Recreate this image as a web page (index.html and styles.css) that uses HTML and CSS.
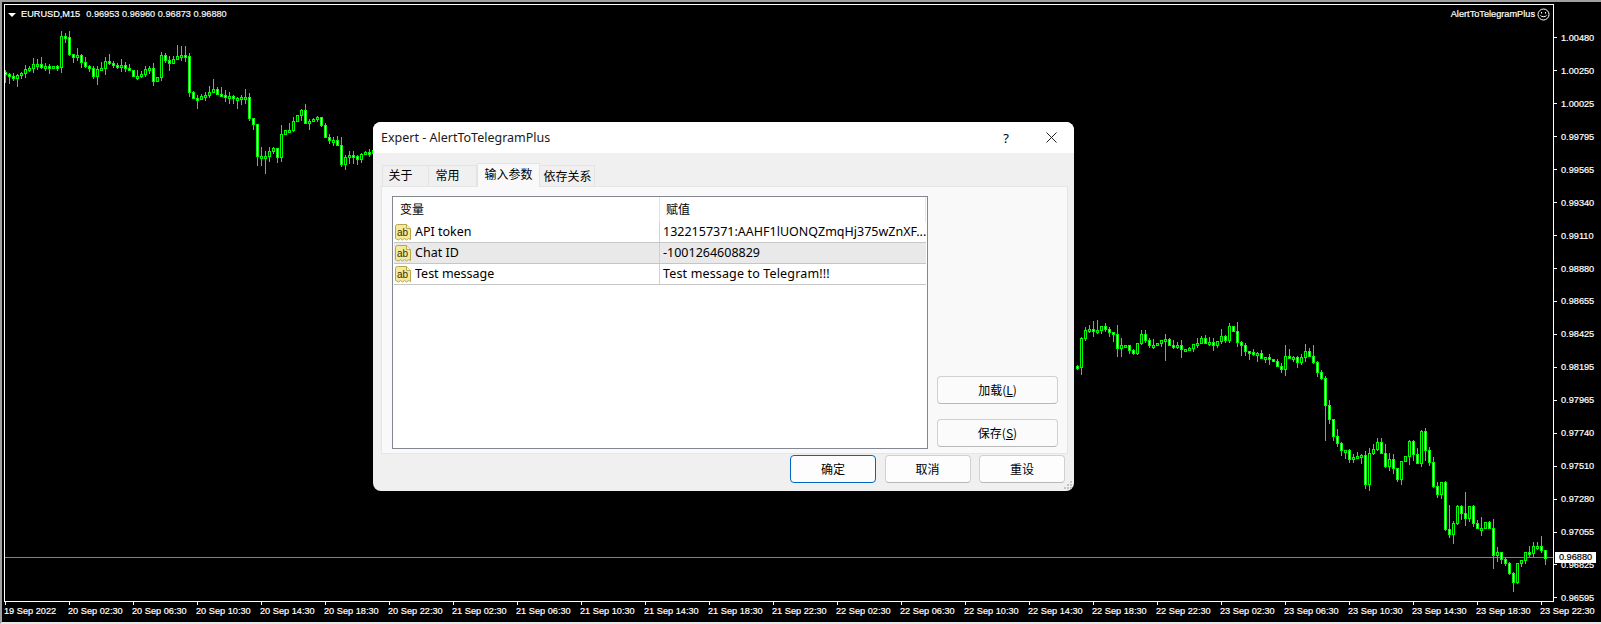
FILE: index.html
```html
<!DOCTYPE html>
<html lang="zh">
<head>
<meta charset="utf-8">
<title>Expert - AlertToTelegramPlus</title>
<link rel="stylesheet" href="styles.css">
</head>
<body>
<div class="screen">
  <div class="terminal">
    <div class="plot">
      <svg class="canvas" width="1548" height="596" viewBox="5 5 1548 596" shape-rendering="crispEdges">
        <rect class="priceline" x="5" y="557" width="1548" height="1"/>
        <path id="candleEdges" class="edges"/>
        <path id="candleUp" class="up"/>
        <path id="candleDown" class="down"/>
      </svg>
      <div class="chart-head">
        <div class="symbol"><span class="marker"></span><span>EURUSD,M15</span><span class="quotes">0.96953 0.96960 0.96873 0.96880</span></div>
        <div class="ea"><span>AlertToTelegramPlus</span>
          <svg class="smile" width="13" height="13" viewBox="0 0 13 13"><circle cx="6.5" cy="6.5" r="5.5"/><path d="M3.5 7.5c.8 1.6 5.200 1.600 6 0"/><path d="M4.500 4v1.500M8.500 4v1.500"/></svg>
        </div>
      </div>
    </div>
    <div class="y-axis" id="yAxis">
      <div class="y-label">1.00480</div><div class="y-label">1.00250</div><div class="y-label">1.00025</div>
      <div class="y-label">0.99795</div><div class="y-label">0.99565</div><div class="y-label">0.99340</div>
      <div class="y-label">0.99110</div><div class="y-label">0.98880</div><div class="y-label">0.98655</div>
      <div class="y-label">0.98425</div><div class="y-label">0.98195</div><div class="y-label">0.97965</div>
      <div class="y-label">0.97740</div><div class="y-label">0.97510</div><div class="y-label">0.97280</div>
      <div class="y-label">0.97055</div><div class="y-label">0.96825</div><div class="y-label">0.96595</div>
      <div class="price-box">0.96880</div>
    </div>
    <div class="x-axis">
      <div class="x-label">19 Sep 2022</div>
      <div class="x-label">20 Sep 02:30</div><div class="x-label">20 Sep 06:30</div><div class="x-label">20 Sep 10:30</div><div class="x-label">20 Sep 14:30</div><div class="x-label">20 Sep 18:30</div><div class="x-label">20 Sep 22:30</div>
      <div class="x-label">21 Sep 02:30</div><div class="x-label">21 Sep 06:30</div><div class="x-label">21 Sep 10:30</div><div class="x-label">21 Sep 14:30</div><div class="x-label">21 Sep 18:30</div><div class="x-label">21 Sep 22:30</div>
      <div class="x-label">22 Sep 02:30</div><div class="x-label">22 Sep 06:30</div><div class="x-label">22 Sep 10:30</div><div class="x-label">22 Sep 14:30</div><div class="x-label">22 Sep 18:30</div><div class="x-label">22 Sep 22:30</div>
      <div class="x-label">23 Sep 02:30</div><div class="x-label">23 Sep 06:30</div><div class="x-label">23 Sep 10:30</div><div class="x-label">23 Sep 14:30</div><div class="x-label">23 Sep 18:30</div><div class="x-label">23 Sep 22:30</div>
    </div>
  </div>
</div>

<div class="dialog">
  <div class="titlebar">
    <span class="title">Expert - AlertToTelegramPlus</span>
    <span class="help">?</span>
    <svg class="close" width="11" height="11" viewBox="0 0 11 11"><path d="M.5.5l10 10M10.500.5l-10 10"/></svg>
  </div>
  <div class="tabs">
    <div class="tab t1">关于</div>
    <div class="tab t2">常用</div>
    <div class="tab active">输入参数</div>
    <div class="tab t4">依存关系</div>
  </div>
  <div class="panel">
    <div class="list">
      <div class="list-head">
        <div class="head-cell c1">变量</div>
        <div class="head-cell c2">赋值</div>
      </div>
      <div class="row">
        <div class="cell c1"><svg class="ab" width="16" height="17" viewBox="0 0 16 17"><path class="ab-doc" d="M.5 2.500q0-2 2-2h9l4 4v11l-2-1-2 1.500-2-1.500-2 1.500-2-1.500-2 1.500-3-1.500z"/><path class="ab-fold" d="M11.500.5v4h4"/><text x="2" y="11.500">ab</text></svg><span>API token</span></div>
        <div class="cell c2">1322157371:AAHF1lUONQZmqHj375wZnXF...</div>
      </div>
      <div class="row selected">
        <div class="cell c1"><svg class="ab" width="16" height="17" viewBox="0 0 16 17"><path class="ab-doc" d="M.5 2.500q0-2 2-2h9l4 4v11l-2-1-2 1.500-2-1.500-2 1.500-2-1.500-2 1.500-3-1.500z"/><path class="ab-fold" d="M11.500.5v4h4"/><text x="2" y="11.500">ab</text></svg><span>Chat ID</span></div>
        <div class="cell c2">-1001264608829</div>
      </div>
      <div class="row">
        <div class="cell c1"><svg class="ab" width="16" height="17" viewBox="0 0 16 17"><path class="ab-doc" d="M.5 2.500q0-2 2-2h9l4 4v11l-2-1-2 1.500-2-1.500-2 1.500-2-1.500-2 1.500-3-1.500z"/><path class="ab-fold" d="M11.500.5v4h4"/><text x="2" y="11.500">ab</text></svg><span>Test message</span></div>
        <div class="cell c2 spaced">Test message to Telegram!!!</div>
      </div>
    </div>
    <div class="side">
      <button class="btn side-btn">加载(<u>L</u>)</button>
      <button class="btn side-btn">保存(<u>S</u>)</button>
    </div>
  </div>
  <div class="actions">
    <button class="btn action primary">确定</button>
    <button class="btn action">取消</button>
    <button class="btn action">重设</button>
  </div>
  <svg class="grip" width="9" height="9" viewBox="0 0 9 9"><path d="M6 0h2v2H6zM3 3h2v2H3zM6 3h2v2H6zM0 6h2v2H0zM3 6h2v2H3zM6 6h2v2H6z"/></svg>
</div>
<script src="chart.js"></script>
</body>
</html>
```
FILE: styles.css
```css
* { box-sizing: border-box; }
html, body { margin: 0; padding: 0; background: #000; overflow: hidden; }
body { width: 1601px; height: 624px; position: relative; font-family: "Noto Sans", "Noto Sans CJK SC", sans-serif; }

.screen {
  width: 1601px; height: 624px; background: #000;
  border-top: 2px solid #a0a0a0; border-left: 2px solid #a0a0a0; border-bottom: 2px solid #e8e8e8;
  padding: 2px 0 0 2px;
}
.terminal {
  display: grid; grid-template-columns: 1550px 1fr; grid-template-rows: 598px 1fr; height: 100%;
  font-family: "Liberation Sans", sans-serif; font-size: 9.2px; color: #fff; -webkit-text-stroke: .2px currentColor;
}
.plot { position: relative; border: 1px solid #fff; }
.canvas { position: absolute; left: 0; top: 0; display: block; }
.priceline { fill: #808080; }
.edges { fill: #00ff00; }
.up { fill: #000; }
.down { fill: #fff; }
.chart-head { position: relative; display: flex; justify-content: space-between; padding: 3px 3px 0 3px; line-height: 13px; }
.symbol { display: flex; align-items: center; }
.marker { width: 0; height: 0; border-left: 4px solid transparent; border-right: 4px solid transparent; border-top: 4px solid #fff; margin-right: 5px; }
.quotes { margin-left: 6px; color: #f2f8ff; }
.ea { display: flex; align-items: center; gap: 2px; }
.smile { fill: none; stroke: #fff; stroke-width: 1; }

.y-axis { position: relative; display: flex; flex-direction: column; padding-top: 17.5px; }
.y-label { flex: 0 0 32.94px; display: flex; align-items: center; }
.y-label::before { content: ""; width: 3px; height: 1px; background: #fff; margin-right: 4px; }
.price-box {
  position: absolute; left: 1px; top: 548px; width: 41px; height: 11px; background: #fff; color: #000;
  line-height: 11px; text-align: center;
}

.x-axis { display: flex; padding-left: 1px; grid-column: 1 / 3; }
.x-label { position: relative; flex: 0 0 64px; white-space: nowrap; padding-top: 3px; line-height: 12px; text-indent: -1px; }
.x-label::before { content: ""; position: absolute; left: 0; top: 0; width: 1px; height: 3px; background: #fff; }

.dialog {
  position: absolute; left: 373px; top: 122px; width: 701px; height: 369px;
  background: #f0f0f0; border-radius: 8px; overflow: hidden;
  display: flex; flex-direction: column; color: #000;
  font-family: "Noto Sans", "Noto Sans CJK SC", sans-serif; font-size: 12.5px;
}
.titlebar { flex: 0 0 31px; background: #fff; display: flex; align-items: center; padding: 0 17px 0 8px; font-size: 12.5px; }
.title { flex: 1; color: #1a1a1a; }
.help { margin-right: 37px; font-size: 13px; }
.close { stroke: #222; fill: none; stroke-width: 1; }

.tabs { display: flex; align-items: flex-end; height: 33px; flex: 0 0 33px; padding-left: 9px; position: relative; z-index: 1; }
.tab {
  height: 21px; width: 47px; background: #f0f0f0; border: 1px solid #e4e4e4; border-bottom: 0; border-left: 0;
  font-size: 12px; line-height: 18px; text-align: center; font-family: "Noto Sans CJK SC", sans-serif;
}
.t1 { width: 47px; padding-right: 10px; border-left: 1px solid #e4e4e4; }
.t2 { width: 48px; padding-right: 10px; }
.active { width: 63px; height: 24px; background: #f9f9f9; border-left: 1px solid #e4e4e4; line-height: 19px; margin-bottom: -1px; position: relative; }
.t4 { width: 55px; padding-left: 1px; line-height: 19px; }

.panel {
  margin: 0 6px 0 8px; height: 268px; flex: 0 0 268px; background: #f9f9f9; border: 1px solid #e6e6e6;
  padding: 9px 9px 4px 10px; display: flex; gap: 9px;
}
.list { width: 536px; height: 253px; background: #fff; border: 1px solid #828790; padding: 0 1px; }
.list-head { display: flex; height: 25px; font-family: "Noto Sans CJK SC", sans-serif; font-size: 12px; }
.head-cell { display: flex; align-items: center; padding: 0 0 2px 6px; border-right: 1px solid #e5e5e5; }
.head-cell.c1 { width: 266px; }
.head-cell.c2 { width: 266px; }
.row { display: flex; height: 21px; border-bottom: 1px solid #c6c6c6; font-size: 12.5px; line-height: 20px; }
.row.selected { background: #e9e9e9; }
.cell { white-space: nowrap; overflow: hidden; display: flex; align-items: center; }
.cell.c1 { width: 266px; border-right: 1px solid #d0d0d0; padding-left: 1px; gap: 4px; }
.cell.c2 { flex: 1; padding-left: 3px; }
.cell.spaced { letter-spacing: .15px; }
.ab { flex: none; }
.ab-doc { fill: #f4e99c; stroke: #b7a650; stroke-width: 1; }
.ab-fold { fill: #fff7c8; stroke: #b7a650; stroke-width: 1; }
.ab text { font: 10px "Liberation Sans", sans-serif; fill: #3a3000; }

.side { display: flex; flex-direction: column; justify-content: flex-end; gap: 15px; width: 121px; height: 253px; padding-bottom: 2px; }
.btn {
  display: block; background: #fdfdfd; border: 1px solid #d0d0d0; border-bottom-color: #b8b8b8; border-radius: 4px; padding: 0; color: #000;
  font-family: "Noto Sans CJK SC", sans-serif; font-size: 12px; height: 28px; line-height: 26px;
}
.side-btn { width: 121px; background: #fbfbfb; padding-bottom: 3px; }
.actions { display: flex; justify-content: flex-end; gap: 8.5px; padding: 1px 9px 0 0; }
.action { width: 86px; }
.primary { border: 1.5px solid #0067c0; }
.grip { position: absolute; right: 1px; bottom: 1px; fill: #c4c4c4; }
```
FILE: chart.js
```js
(function () {
  // Close-price trace read off the chart: [x, y] at the 4px candle grid.
  var KEY = [[5,74],[13,77],[21,72],[29,68],[33,64],[45,68],[57,68],[61,36],[65,39],[69,55],[77,55],[85,65],[93,75],[105,62],[113,65],[125,67],[133,76],[141,74],[149,66],[153,82],[157,76],[161,56],[169,63],[177,56],[185,55],[189,90],[193,98],[197,98],[209,91],[213,88],[217,95],[233,99],[245,97],[249,118],[253,125],[257,157],[261,156],[273,150],[277,157],[281,133],[289,130],[297,116],[301,111],[305,125],[317,118],[325,135],[337,145],[341,162],[349,155],[357,157],[373,150],[1073,366],[1077,368],[1081,337],[1085,329],[1093,331],[1101,328],[1105,328],[1113,335],[1117,348],[1121,345],[1133,352],[1141,335],[1149,346],[1157,343],[1165,341],[1173,346],[1189,350],[1197,342],[1201,340],[1213,344],[1221,338],[1225,338],[1229,326],[1233,330],[1237,343],[1245,350],[1257,355],[1269,360],[1281,367],[1285,355],[1297,360],[1305,351],[1313,363],[1321,378],[1325,407],[1329,419],[1333,435],[1341,452],[1345,452],[1349,458],[1361,453],[1365,485],[1369,454],[1377,444],[1385,465],[1389,459],[1397,480],[1401,461],[1405,456],[1409,443],[1413,455],[1417,464],[1421,432],[1425,448],[1429,462],[1433,484],[1437,496],[1441,480],[1445,528],[1449,534],[1453,524],[1457,506],[1461,512],[1465,516],[1469,507],[1473,525],[1477,528],[1481,529],[1485,524],[1489,528],[1493,555],[1497,553],[1501,560],[1505,564],[1509,573],[1513,582],[1517,564],[1521,558],[1525,552],[1529,552],[1533,546],[1537,546],[1541,552],[1545,557]];
  var WICK = {181:[46,0],213:[79,0],265:[0,173],1165:[0,360],1325:[0,440],1465:[492,0],1449:[505,0],1493:[0,568]};
  var seed = 12345;
  function rnd() { seed = (seed * 1103515245 + 12345) & 0x7fffffff; return seed / 0x7fffffff; }
  function closeAt(x) {
    for (var i = 0; i < KEY.length - 1; i++) {
      var a = KEY[i], b = KEY[i + 1];
      if (x >= a[0] && x <= b[0]) {
        if (x === a[0]) return a[1];
        return a[1] + (b[1] - a[1]) * (x - a[0]) / (b[0] - a[0]) + (rnd() - 0.5) * 4;
      }
    }
    return KEY[KEY.length - 1][1];
  }
  function rect(x, y, w, h) { return "M" + x + " " + y + "h" + w + "v" + h + "h" + (-w) + "z"; }
  var edges = "", up = "", down = "", prev = 72;
  for (var x = 5; x <= 1545; x += 4) {
    var cl = Math.round(closeAt(x));
    var op = Math.round(prev);
    prev = cl;
    if (x > 373 && x < 1077) continue;
    var bt = Math.min(op, cl), bb = Math.max(op, cl);
    if (bb - bt < 2) bb = bt + 2;
    var hi = bt - Math.round(rnd() * rnd() * 12), lo = bb + Math.round(rnd() * rnd() * 12);
    var w = WICK[x];
    if (w) { if (w[0]) hi = w[0]; if (w[1]) lo = w[1]; }
    edges += rect(x, hi, 1, lo - hi + 1) + rect(x - 1, bt, 3, bb - bt + 1);
    if (cl <= op) up += rect(x, bt + 1, 1, bb - bt - 1);
    else down += rect(x, bt + 1, 1, bb - bt - 1);
  }
  document.getElementById("candleEdges").setAttribute("d", edges);
  document.getElementById("candleUp").setAttribute("d", up);
  document.getElementById("candleDown").setAttribute("d", down);
})();
```
